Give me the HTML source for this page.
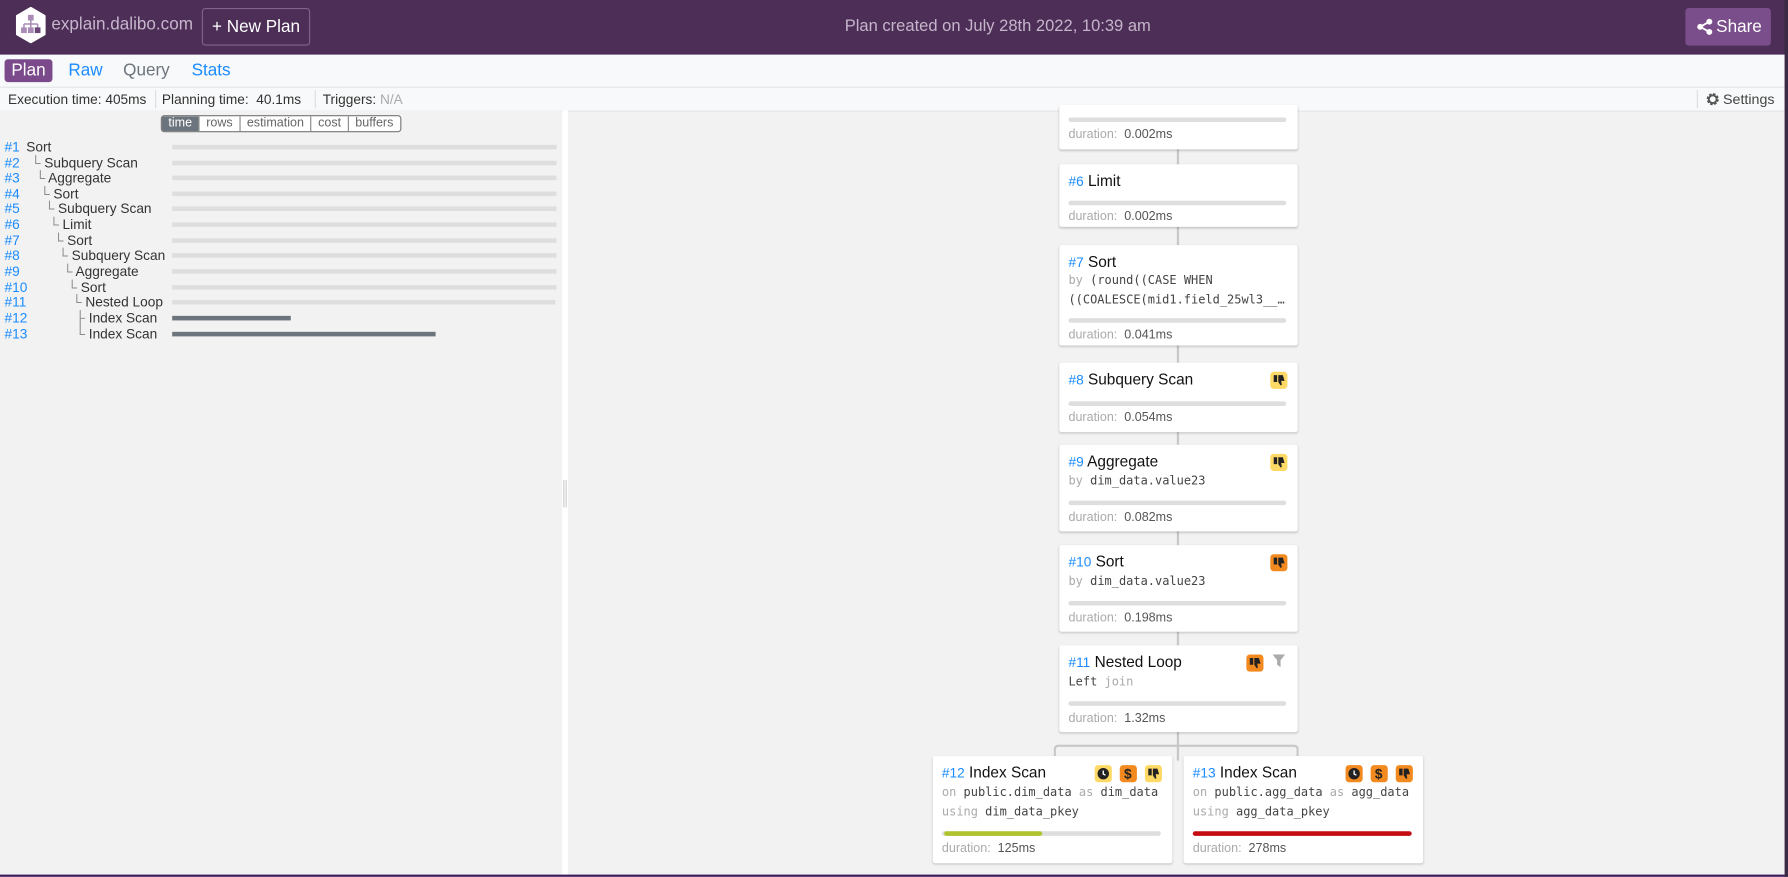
<!DOCTYPE html>
<html><head><meta charset="utf-8">
<style>
html,body{margin:0;padding:0;width:1788px;height:877px;overflow:hidden;background:#f2f2f2;}
#w{position:absolute;left:0;top:0;width:1568px;height:769px;transform:scale(1.14031);transform-origin:0 0;font-family:"Liberation Sans",sans-serif;color:#212529;background:#f2f2f2;overflow:hidden}
.a{position:absolute}
.hdr{left:0;top:0;width:1568px;height:48px;background:#4c2e56}
.btn{border:1px solid #7f6489;border-radius:3px;color:#fff;font-size:15px;line-height:31px;text-align:center}
.nav{left:0;top:48px;width:1568px;height:28px;background:#f8f9fa}
.tab{top:52px;height:20px;line-height:20px;font-size:15px}
.sb{left:0;top:76px;width:1568px;height:20px;background:#f8f9fa;border-top:1px solid #e2e4e6;border-bottom:1px solid #e2e4e6;font-size:12px;line-height:20px;color:#333}
.left{left:0;top:97px;width:492px;height:672px;background:#f2f2f2}
.split{left:493px;top:97px;width:5px;height:672px;background:#fff}
.tg{top:101px;height:13px;border:1px solid #777;border-radius:3px;display:flex;font-size:11px;line-height:13px;color:#666;background:#fff;overflow:hidden}
.tg span{padding:0 5.7px;border-left:1px solid #888}
.row{left:4px;font-size:12px;height:14px;line-height:14px;color:#333;white-space:nowrap}
.row b{font-weight:normal;color:#1a8cff;display:inline-block;width:0}
.bar{left:151px;width:337px;height:4px;background:#dedede}
.card{background:#fff;border-radius:2px;box-shadow:0 1px 2px rgba(0,0,0,.18)}
.ct{position:absolute;left:8px;top:7px;font-size:13.5px;color:#111;white-space:nowrap}
.ct i{font-style:normal;color:#1a8cff;font-size:12px}
.cd{position:absolute;left:8px;font-size:11px;color:#aaa;white-space:nowrap}
.cd span{color:#555}
.cb{position:absolute;left:8px;right:10px;height:4px;border-radius:2px;background:#dedede}
.mono{position:absolute;left:8px;font-family:"DejaVu Sans Mono","Liberation Mono",monospace;font-size:10.5px;color:#444;white-space:nowrap;line-height:17px}
.mono i{font-style:normal;color:#aaa}
.vl{width:2px;background:#c8c8c8}
.ic{position:absolute;width:15px;height:15px;border-radius:3px;top:8px}
.y{background:#ffd966}.o{background:#f28a1f}
</style></head><body><div id="w">
<div class="a hdr"></div>
<svg class="a" style="left:13px;top:6px" width="28" height="32" viewBox="0 0 28 32"><path d="M14 1 L26 8 L26 24 L14 31 L2 24 L2 8 Z" fill="#fff" stroke="#fff" stroke-width="2" stroke-linejoin="round"/><rect x="11.5" y="7" width="5" height="5" fill="#a98bb5"/><path d="M14 12v3M8 15h12M8 15v3M14 15v3M20 15v3" stroke="#a98bb5" stroke-width="1.3" fill="none"/><rect x="5.5" y="18" width="5" height="5" fill="#a98bb5"/><rect x="11.5" y="18" width="5" height="5" fill="#a98bb5"/><rect x="17.5" y="18" width="5" height="5" fill="#6b4778"/></svg>
<div class="a" style="left:45px;top:13px;font-size:15px;color:#c6b6cc">explain.dalibo.com</div>
<div class="a btn" style="left:177px;top:7px;width:93px;height:31px">+ New Plan</div>
<div class="a" style="left:0;width:1750px;top:15px;text-align:center;font-size:14.5px;color:#c5b5cb">Plan created on July 28th 2022, 10:39 am</div>
<div class="a" style="left:1478px;top:7px;width:75px;height:33px;background:#7a4e8a;border-radius:3px;color:#fff;font-size:15px;line-height:33px">
<svg class="a" style="left:10px;top:9px" width="14" height="15" viewBox="0 0 14 15"><circle cx="11" cy="3" r="2.6" fill="#fff"/><circle cx="3" cy="7.5" r="2.6" fill="#fff"/><circle cx="11" cy="12" r="2.6" fill="#fff"/><path d="M11 3L3 7.5L11 12" stroke="#fff" stroke-width="1.6" fill="none"/></svg>
<span class="a" style="left:27px;top:0">Share</span></div>
<div class="a nav"></div>
<div class="a tab" style="left:4px;width:42px;background:#7b4a8a;color:#fff;border-radius:3px;text-align:center">Plan</div>
<div class="a tab" style="left:60px;color:#1a8cff">Raw</div>
<div class="a tab" style="left:108px;color:#6c757d">Query</div>
<div class="a tab" style="left:168px;color:#1a8cff">Stats</div>
<div class="a sb"></div>
<div class="a" style="left:7px;top:77px;font-size:12px;line-height:20px;color:#333">Execution time: 405ms</div>
<div class="a" style="left:136px;top:79px;width:1px;height:16px;background:#ddd"></div>
<div class="a" style="left:142px;top:77px;font-size:12px;line-height:20px;color:#333">Planning time:&nbsp; 40.1ms</div>
<div class="a" style="left:276px;top:79px;width:1px;height:16px;background:#ddd"></div>
<div class="a" style="left:283px;top:77px;font-size:12px;line-height:20px;color:#333">Triggers: <span style="color:#aaa">N/A</span></div>
<div class="a" style="left:1488px;top:79px;width:1px;height:16px;background:#ddd"></div>
<svg class="a" style="left:1496px;top:81px" width="12" height="12" viewBox="0 0 12 12"><circle cx="6" cy="6" r="4" fill="none" stroke="#555" stroke-width="2.6" stroke-dasharray="2 1.15"/><circle cx="6" cy="6" r="3.4" fill="none" stroke="#555" stroke-width="1.6"/></svg>
<div class="a" style="left:1511px;top:77px;font-size:12.5px;line-height:20px;color:#444">Settings</div>
<div class="a left"></div>
<div class="a split"></div>
<div class="a" style="left:494px;top:421px;width:1px;height:24px;background:#ccc"></div>
<div class="a" style="left:496px;top:421px;width:1px;height:24px;background:#ccc"></div>
<div class="a tg" style="left:141px"><span style="border:0;background:#6c757d;color:#fff">time</span><span>rows</span><span>estimation</span><span>cost</span><span>buffers</span></div>

<div class="a row" style="top:122px"><b>#1</b><span style="margin-left:19px">Sort</span></div>
<div class="a row" style="top:136px"><b>#2</b><span style="margin-left:23px;color:#888">└ </span>Subquery Scan</div>
<div class="a row" style="top:149px"><b>#3</b><span style="margin-left:27px;color:#888">└ </span>Aggregate</div>
<div class="a row" style="top:163px"><b>#4</b><span style="margin-left:31px;color:#888">└ </span>Sort</div>
<div class="a row" style="top:176px"><b>#5</b><span style="margin-left:35px;color:#888">└ </span>Subquery Scan</div>
<div class="a row" style="top:190px"><b>#6</b><span style="margin-left:39px;color:#888">└ </span>Limit</div>
<div class="a row" style="top:204px"><b>#7</b><span style="margin-left:43px;color:#888">└ </span>Sort</div>
<div class="a row" style="top:217px"><b>#8</b><span style="margin-left:47px;color:#888">└ </span>Subquery Scan</div>
<div class="a row" style="top:231px"><b>#9</b><span style="margin-left:51px;color:#888">└ </span>Aggregate</div>
<div class="a row" style="top:245px"><b>#10</b><span style="margin-left:55px;color:#888">└ </span>Sort</div>
<div class="a row" style="top:258px"><b>#11</b><span style="margin-left:59px;color:#888">└ </span>Nested Loop</div>
<div class="a row" style="top:272px"><b>#12</b><span style="margin-left:62px;color:#888">├ </span>Index Scan</div>
<div class="a row" style="top:286px"><b>#13</b><span style="margin-left:62px;color:#888">└ </span>Index Scan</div>
<div class="a bar" style="top:127px"></div><div class="a bar" style="top:141px"></div><div class="a bar" style="top:154px"></div><div class="a bar" style="top:168px"></div><div class="a bar" style="top:181px"></div><div class="a bar" style="top:195px"></div><div class="a bar" style="top:209px"></div><div class="a bar" style="top:222px"></div><div class="a bar" style="top:236px"></div><div class="a bar" style="top:250px"></div><div class="a bar" style="top:263px;width:336px"></div>
<div class="a" style="left:151px;top:277px;width:104px;height:4px;background:#6c757d"></div>
<div class="a" style="left:151px;top:291px;width:231px;height:4px;background:#6c757d"></div>

<div class="a vl" style="left:1032px;top:97px;height:570px"></div>
<div class="a" style="left:924px;top:653px;width:211px;height:12px;border:2px solid #c8c8c8;border-bottom:0;border-radius:4px 4px 0 0"></div>

<div class="a card" style="left:929px;top:92px;width:209px;height:39px"><div class="cb" style="top:11px"></div><div class="cd" style="top:20px">duration:&nbsp; <span>0.002ms</span></div></div>
<div class="a card" style="left:929px;top:144px;width:209px;height:55px"><div class="ct"><i>#6</i> Limit</div><div class="cb" style="top:32px"></div><div class="cd" style="top:40px">duration:&nbsp; <span>0.002ms</span></div></div>
<div class="a card" style="left:929px;top:215px;width:209px;height:88px"><div class="ct"><i>#7</i> Sort</div><div class="mono" style="top:23px"><i>by</i> (round((CASE WHEN<br>((COALESCE(mid1.field_25wl3__…</div><div class="cb" style="top:64px"></div><div class="cd" style="top:73px">duration:&nbsp; <span>0.041ms</span></div></div>
<div class="a card" style="left:929px;top:318px;width:209px;height:61px"><div class="ct"><i>#8</i> Subquery Scan</div><div class="ic y" style="left:185px"></div><div class="cb" style="top:34px"></div><div class="cd" style="top:42px">duration:&nbsp; <span>0.054ms</span></div></div>
<div class="a card" style="left:929px;top:390px;width:209px;height:76px"><div class="ct"><i>#9</i> Aggregate</div><div class="ic y" style="left:185px"></div><div class="mono" style="top:24px"><i>by</i> dim_data.value23</div><div class="cb" style="top:49px"></div><div class="cd" style="top:58px">duration:&nbsp; <span>0.082ms</span></div></div>
<div class="a card" style="left:929px;top:478px;width:209px;height:76px"><div class="ct"><i>#10</i> Sort</div><div class="ic o" style="left:185px"></div><div class="mono" style="top:24px"><i>by</i> dim_data.value23</div><div class="cb" style="top:49px"></div><div class="cd" style="top:58px">duration:&nbsp; <span>0.198ms</span></div></div>
<div class="a card" style="left:929px;top:566px;width:209px;height:76px"><div class="ct"><i>#11</i> Nested Loop</div><div class="ic o" style="left:164px"></div>
<svg class="a" style="left:187px;top:8px" width="11" height="11" viewBox="0 0 11 11"><path d="M0 0H11L7 5V11L4 9V5Z" fill="#aaa"/></svg>
<div class="mono" style="top:24px">Left <i>join</i></div><div class="cb" style="top:49px"></div><div class="cd" style="top:58px">duration:&nbsp; <span>1.32ms</span></div></div>
<div class="a card" style="left:818px;top:663px;width:210px;height:94px"><div class="ct"><i>#12</i> Index Scan</div><div class="ic y" style="left:142px"></div><div class="ic o" style="left:164px"></div><div class="ic y" style="left:186px"></div><div class="mono" style="top:24px"><i>on</i> public.dim_data <i>as</i> dim_data<br><i>using</i> dim_data_pkey</div><div class="cb" style="top:66px"></div><div class="a" style="left:10px;top:66px;width:86px;height:4px;border-radius:2px;background:#b0c22c"></div><div class="cd" style="top:75px">duration:&nbsp; <span>125ms</span></div></div>
<div class="a card" style="left:1038px;top:663px;width:210px;height:94px"><div class="ct"><i>#13</i> Index Scan</div><div class="ic o" style="left:142px"></div><div class="ic o" style="left:164px"></div><div class="ic o" style="left:186px"></div><div class="mono" style="top:24px"><i>on</i> public.agg_data <i>as</i> agg_data<br><i>using</i> agg_data_pkey</div><div class="cb" style="top:66px;background:#c40c12"></div><div class="cd" style="top:75px">duration:&nbsp; <span>278ms</span></div></div>

<svg width="0" height="0" style="position:absolute"><defs>
<g id="td"><path d="M2 2h3v6H2z M6 2h4l1.5 5H8.5l0.6 3.5L8 11 6 8z" fill="#222"/></g>
<g id="ck"><circle cx="7" cy="7" r="5" fill="#222"/><path d="M7 4.2V7.3L9 8.3" stroke="#fff" stroke-width="1.2" fill="none"/></g>
<g id="dl"><text x="7" y="11.5" font-size="12" font-weight="bold" text-anchor="middle" fill="#222" font-family="Liberation Sans">$</text></g>
</defs></svg>
<svg class="a" style="left:1114px;top:326px" width="15" height="15"><use href="#td" x="1" y="1"/></svg>
<svg class="a" style="left:1114px;top:398px" width="15" height="15"><use href="#td" x="1" y="1"/></svg>
<svg class="a" style="left:1114px;top:486px" width="15" height="15"><use href="#td" x="1" y="1"/></svg>
<svg class="a" style="left:1093px;top:574px" width="15" height="15"><use href="#td" x="1" y="1"/></svg>
<svg class="a" style="left:960px;top:671px" width="15" height="15"><use href="#ck" x="0.5" y="0.5"/></svg>
<svg class="a" style="left:982px;top:671px" width="15" height="15"><use href="#dl"/></svg>
<svg class="a" style="left:1004px;top:671px" width="15" height="15"><use href="#td" x="1" y="1"/></svg>
<svg class="a" style="left:1180px;top:671px" width="15" height="15"><use href="#ck" x="0.5" y="0.5"/></svg>
<svg class="a" style="left:1202px;top:671px" width="15" height="15"><use href="#dl"/></svg>
<svg class="a" style="left:1224px;top:671px" width="15" height="15"><use href="#td" x="1" y="1"/></svg>
<div class="a" style="left:0;top:767px;width:1568px;height:2px;background:#3a1a5c"></div>
<div class="a" style="left:1565px;top:0;width:3px;height:769px;background:#3a2a45"></div>
</div></body></html>
